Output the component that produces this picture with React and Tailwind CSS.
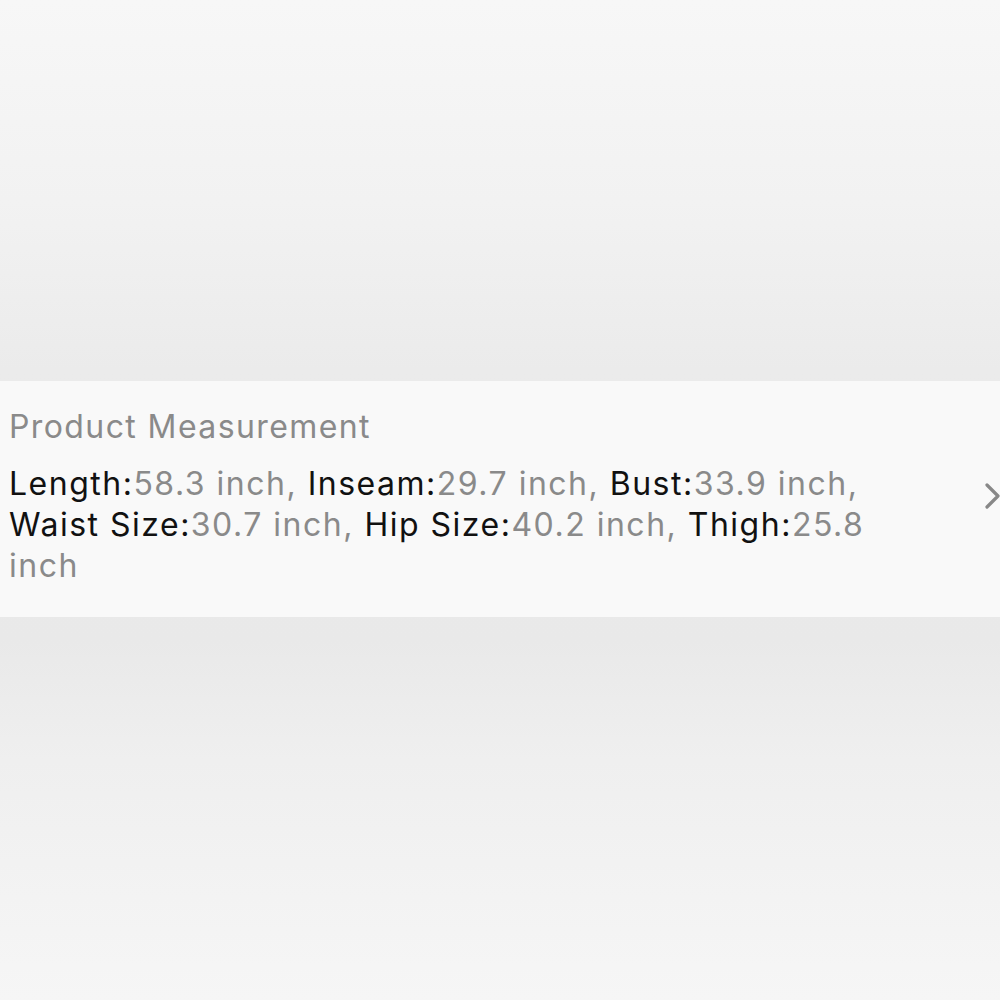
export default function App() {
  const K = "text-[#111111]";
  const V = "text-[#8a8a8a]";
  return (
    <div
      className="w-[1000px] h-[1000px] overflow-hidden flex flex-col bg-[linear-gradient(180deg,#f7f7f7_0%,#f2f2f2_20%,#ebebeb_37%,#e9e9e9_64%,#efefef_76%,#f6f6f6_100%)]"
      style={{ fontFamily: '"Inter", "Roboto", sans-serif' }}
    >
      <div className="h-[381px]" />
      <div className="h-[236px] bg-[#f9f9f9] flex items-start">
        <div className="flex-1 pl-[9px] pt-[26px]">
          <div className="text-[32px] leading-[40px] text-[#8a8a8a] tracking-[1.4px]">Product Measurement</div>
          <div className="mt-[16px] text-[32px] leading-[41px] tracking-[1.5px]">
            <span className={K}>Length:</span><span className={V}>58.3 inch, </span>
            <span className={K}>Inseam:</span><span className={V}>29.7 inch, </span>
            <span className={K}>Bust:</span><span className={V}>33.9 inch,</span>
            <br />
            <span className={K}>Waist Size:</span><span className={V}>30.7 inch, </span>
            <span className={K}>Hip Size:</span><span className={V}>40.2 inch, </span>
            <span className={K}>Thigh:</span><span className={V}>25.8</span>
            <br />
            <span className={V}>inch</span>
          </div>
        </div>
        <div className="w-[20px] pt-[101px]">
          <svg width="20" height="30" viewBox="0 0 20 30" fill="none">
            <polyline points="7,3 18,14 7,25" stroke="#888888" strokeWidth="3.2" strokeLinecap="round" strokeLinejoin="round" />
          </svg>
        </div>
      </div>
      <div className="flex-1" />
    </div>
  );
}
